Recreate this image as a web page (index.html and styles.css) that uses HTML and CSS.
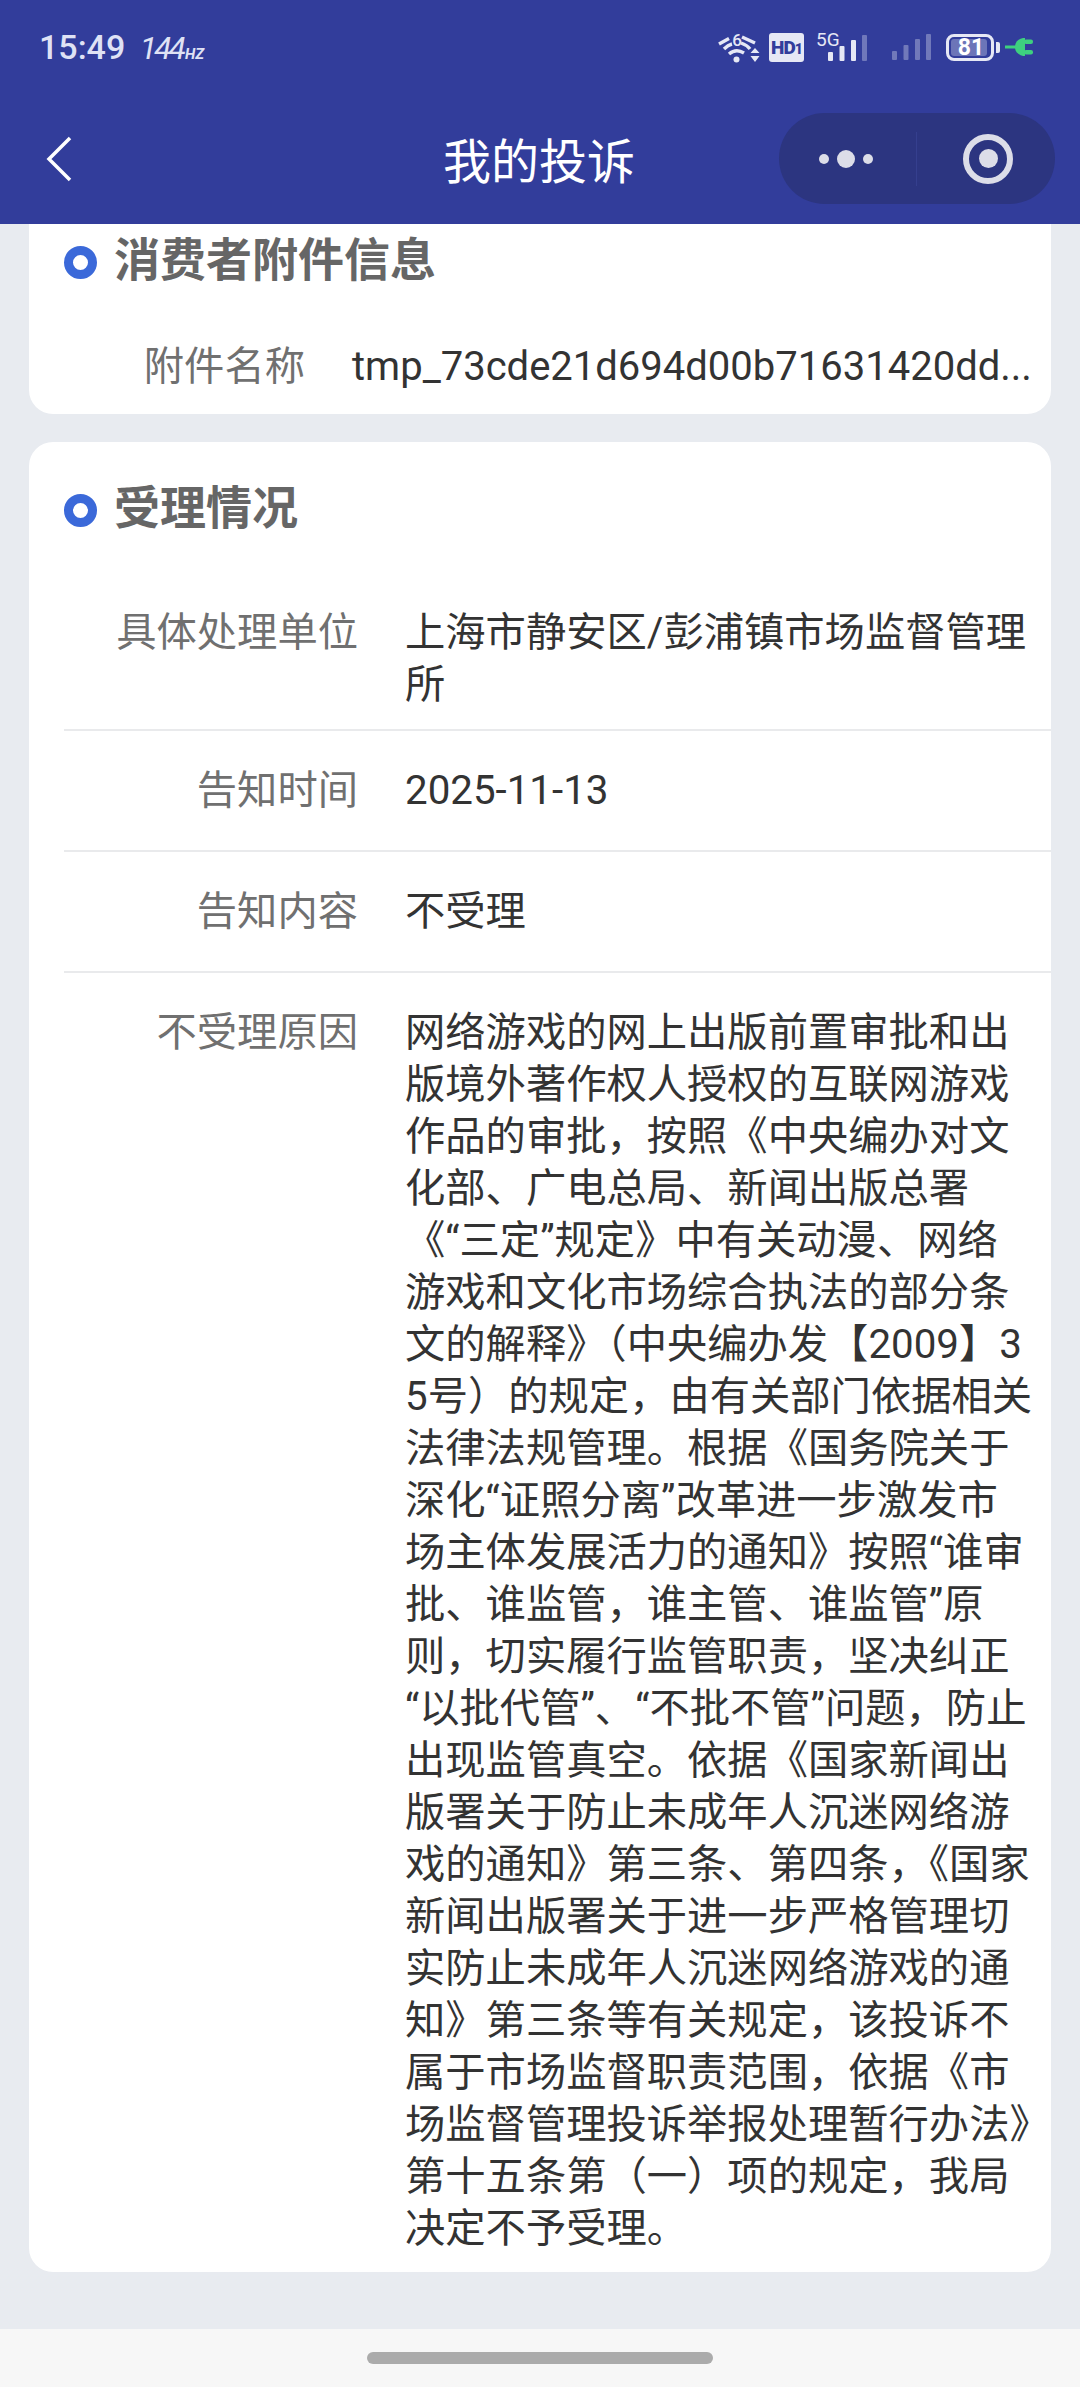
FILE: index.html
```html
<!DOCTYPE html>
<html lang="zh-CN">
<head>
    <meta charset="UTF-8">
    <meta name="viewport" content="width=device-width, initial-scale=1.0">
    <title>我的投诉</title>
    <link rel="stylesheet" href="styles.css">
</head>
<body>
    <header class="top">
        <div class="status">
            <div class="clock">15:49 <i class="rate"><span class="rate-num">144</span><small>HZ</small></i></div>
            <div class="sys">
                <svg class="wifi" width="42" height="32" viewBox="0 0 42 32">
                    <g fill="none" stroke="#e6e8f5" stroke-width="3.4">
                        <path d="M1 13 L11 7.5"/>
                        <path d="M24 6 L37 12"/>
                        <path d="M6 18 Q10 14 14 13"/>
                        <path d="M23 12 Q29 14 32 18"/>
                        <path d="M11 23 Q18 17 26 22"/>
                    </g>
                    <text x="19" y="15" class="wifi-six">6</text>
                    <circle cx="18.500" cy="28.500" r="3" fill="#e6e8f5"/>
                    <path d="M37 17 L41.500 22 H32.500 Z M32.500 25 H41.500 L37 31 Z" fill="#e6e8f5"/>
                </svg>
                <span class="hd">HD<small>1</small></span>
                <span class="signal">
                    <em class="five-g">5G</em>
                    <svg width="40" height="28" viewBox="0 0 40 28" fill="#e6e8f5">
                        <rect x="0" y="18" width="5" height="9" rx="1"/>
                        <rect x="11.500" y="12" width="5" height="15" rx="1"/>
                        <rect x="23" y="6" width="5" height="21" rx="1"/>
                        <rect x="34" y="1" width="5" height="26" rx="1" opacity="0.35"/>
                    </svg>
                </span>
                <svg class="signal-two" width="40" height="28" viewBox="0 0 40 28" fill="#e6e8f5" opacity="0.35">
                    <rect x="0" y="18" width="5" height="9" rx="1"/>
                    <rect x="11.500" y="12" width="5" height="15" rx="1"/>
                    <rect x="23" y="6" width="5" height="21" rx="1"/>
                    <rect x="34" y="1" width="5" height="26" rx="1"/>
                </svg>
                <span class="battery"><span class="level">81</span></span>
                <span class="tip"></span>
                <svg width="29" height="22" viewBox="0 0 29 22" fill="#3ed07f">
                    <rect x="0" y="9.500" width="11" height="3"/>
                    <path d="M10 11 Q10 4 18 2 H20 V20 H18 Q10 18 10 11 Z"/>
                    <rect x="19" y="3.500" width="9" height="4.500" rx="2"/>
                    <rect x="19" y="14" width="9" height="4.500" rx="2"/>
                </svg>
            </div>
        </div>
        <nav class="bar">
            <svg class="back" width="26" height="46" viewBox="0 0 26 46" fill="none" stroke="#fff" stroke-width="3.500">
                <path d="M24 2 L3 23 L24 44"/>
            </svg>
            <h1>我的投诉</h1>
            <div class="capsule">
                <div class="more"><b></b><b class="big"></b><b></b></div>
                <div class="ring"><b></b></div>
            </div>
        </nav>
    </header>

    <main class="content">
        <section class="card clipped">
            <h2><span class="dot"></span>消费者附件信息</h2>
            <div class="row short">
                <div class="label">附件名称</div>
                <div class="value single">tmp_73cde21d694d00b71631420dd...</div>
            </div>
        </section>

        <section class="card">
            <h2 class="gap"><span class="dot"></span>受理情况</h2>
            <div class="row">
                <div class="label">具体处理单位</div>
                <div class="value">上海市静安区/彭浦镇市场监督管理所</div>
            </div>
            <div class="row">
                <div class="label">告知时间</div>
                <div class="value">2025-11-13</div>
            </div>
            <div class="row">
                <div class="label">告知内容</div>
                <div class="value">不受理</div>
            </div>
            <div class="row">
                <div class="label">不受理原因</div>
                <div class="value">网络游戏的网上出版前置审批和出版境外著作权人授权的互联网游戏作品的审批，按照《中央编办对文化部、广电总局、新闻出版总署《“三定”规定》中有关动漫、网络<br>游戏和文化市场综合执法的部分条文的解释》（中央编办发【2009】35号）的规定，由有关部门依据相关法律法规管理。根据《国务院关于深化“证照分离”改革进一步激发市<br>场主体发展活力的通知》按照“谁审批、谁监管，谁主管、谁监管”原则，切实履行监管职责，坚决纠正“以批代管”、“不批不管”问题，防止出现监管真空。依据《国家新闻出版署关于防止未成年人沉迷网络游戏的通知》第三条、第四条，《国家新闻出版署关于进一步严格管理切实防止未成年人沉迷网络游戏的通知》第三条等有关规定，该投诉不属于市场监督职责范围，依据《市场监督管理投诉举报处理暂行办法》第十五条第（一）项的规定，我局决定不予受理。</div>
            </div>
        </section>
    </main>

    <footer class="home"><span class="pill"></span></footer>
</body>
</html>
```

FILE: styles.css
```css
:root { --primary-color: #323d9b; --page-color: #e8ebf0; --icon-color: #e6e8f5; }
* { box-sizing: border-box; }
html, body { height: 100%; }
body { margin: 0; display: flex; flex-direction: column; height: 2387px; overflow: hidden; font-family: Roboto, "Noto Sans CJK SC", sans-serif; background-color: var(--page-color); color: #333; }

.top { background-color: var(--primary-color); height: 224px; flex: none; }
.status { height: 94px; display: flex; align-items: center; justify-content: space-between; padding: 0 46px 0 39px; }
.clock { font-size: 34px; font-weight: 500; color: #dfe2f5; }
.rate { font-weight: 400; margin-left: 6px; }
.rate-num { font-size: 32px; letter-spacing: -3px; }
.rate small { font-size: 15px; font-weight: 700; margin-left: 2px; }
.sys { display: flex; align-items: center; }
.wifi { margin-right: 9px; }
.wifi-six { font-size: 17px; font-weight: 500; fill: #e6e8f5; text-anchor: middle; }
.hd { width: 35px; height: 29px; border-radius: 3px; background-color: var(--icon-color); color: var(--primary-color); font-size: 19px; font-weight: 900; line-height: 29px; text-align: center; margin-right: 12px; letter-spacing: -1px; }
.hd small { font-size: 14px; }
.signal { position: relative; display: flex; padding-left: 12px; width: 64px; height: 30px; align-items: flex-end; margin-right: 12px; }
.five-g { position: absolute; left: 0; top: -1px; font-style: normal; font-size: 19px; line-height: 18px; color: var(--icon-color); }
.signal-two { margin-right: 14px; }
.battery { width: 48px; height: 27px; border: 3px solid var(--icon-color); border-radius: 8px; padding: 2px; display: flex; }
.level { width: 36px; background-color: #6c75b8; border-radius: 3px; color: #fff; font-size: 23px; font-weight: 700; line-height: 17px; text-align: center; padding-left: 4px; }
.tip { width: 4px; height: 11px; margin: 0 5px 0 2px; border-radius: 0 2px 2px 0; background-color: var(--icon-color); }

.bar { height: 130px; display: grid; grid-template-columns: 1fr auto 1fr; align-items: center; padding: 0 25px; }
.back { display: block; margin-left: 21px; }
.bar h1 { margin: 7px 2px 0 0; font-size: 48px; font-weight: 400; line-height: 60px; color: #fff; }
.capsule { justify-self: end; width: 276px; height: 91px; margin-top: -1px; border-radius: 46px; background-color: #2c3580; display: flex; align-items: center; }
.more { width: 138px; height: 54px; display: flex; align-items: center; justify-content: center; gap: 8px; padding-right: 4px; border-right: 1px solid #353f8e; }
.more b { width: 10px; height: 10px; border-radius: 50%; background-color: #dcdde8; }
.more b.big { width: 18px; height: 18px; }
.ring { width: 50px; height: 50px; margin-left: 46px; border: 6px solid #dcdde8; border-radius: 50%; display: flex; align-items: center; justify-content: center; }
.ring b { width: 19px; height: 19px; border-radius: 50%; background-color: #dcdde8; }

.content { flex: 1; padding: 0 29px; display: flex; flex-direction: column; gap: 28px; }
.card { background-color: #fff; border-radius: 24px; padding-left: 35px; }
.card.clipped { border-radius: 0 0 24px 24px; height: 190px; }
.card h2 { margin: 0; padding-top: 8px; display: flex; align-items: center; font-size: 46px; line-height: 56px; font-weight: 700; color: #666; }
.card h2.gap { padding-top: 38px; padding-bottom: 37px; }
.dot { width: 33px; height: 33px; margin: 4px 17px 0 0; border: 9px solid #3b69d9; border-radius: 50%; }

.row { display: flex; min-height: 121px; padding: 34px 0 18px 0; border-bottom: 2px solid #e9eaec; font-size: 40.3px; line-height: 52px; }
.row:last-child { border-bottom: none; padding-bottom: 17px; }
.row.short { min-height: 0; padding-top: 53px; padding-bottom: 0; border-bottom: none; }
.label { width: 294px; flex: none; text-align: right; color: #707070; }
.short .label { width: 241px; }
.value { width: 628px; flex: none; margin-left: 47px; color: #333; word-break: break-all; }
.value.single { width: auto; font-size: 40px; white-space: nowrap; }

.home { height: 58px; flex: none; background-color: #f7f7f7; display: flex; justify-content: center; padding-top: 23px; }
.pill { width: 346px; height: 12px; border-radius: 6px; background-color: #ababab; }
```
